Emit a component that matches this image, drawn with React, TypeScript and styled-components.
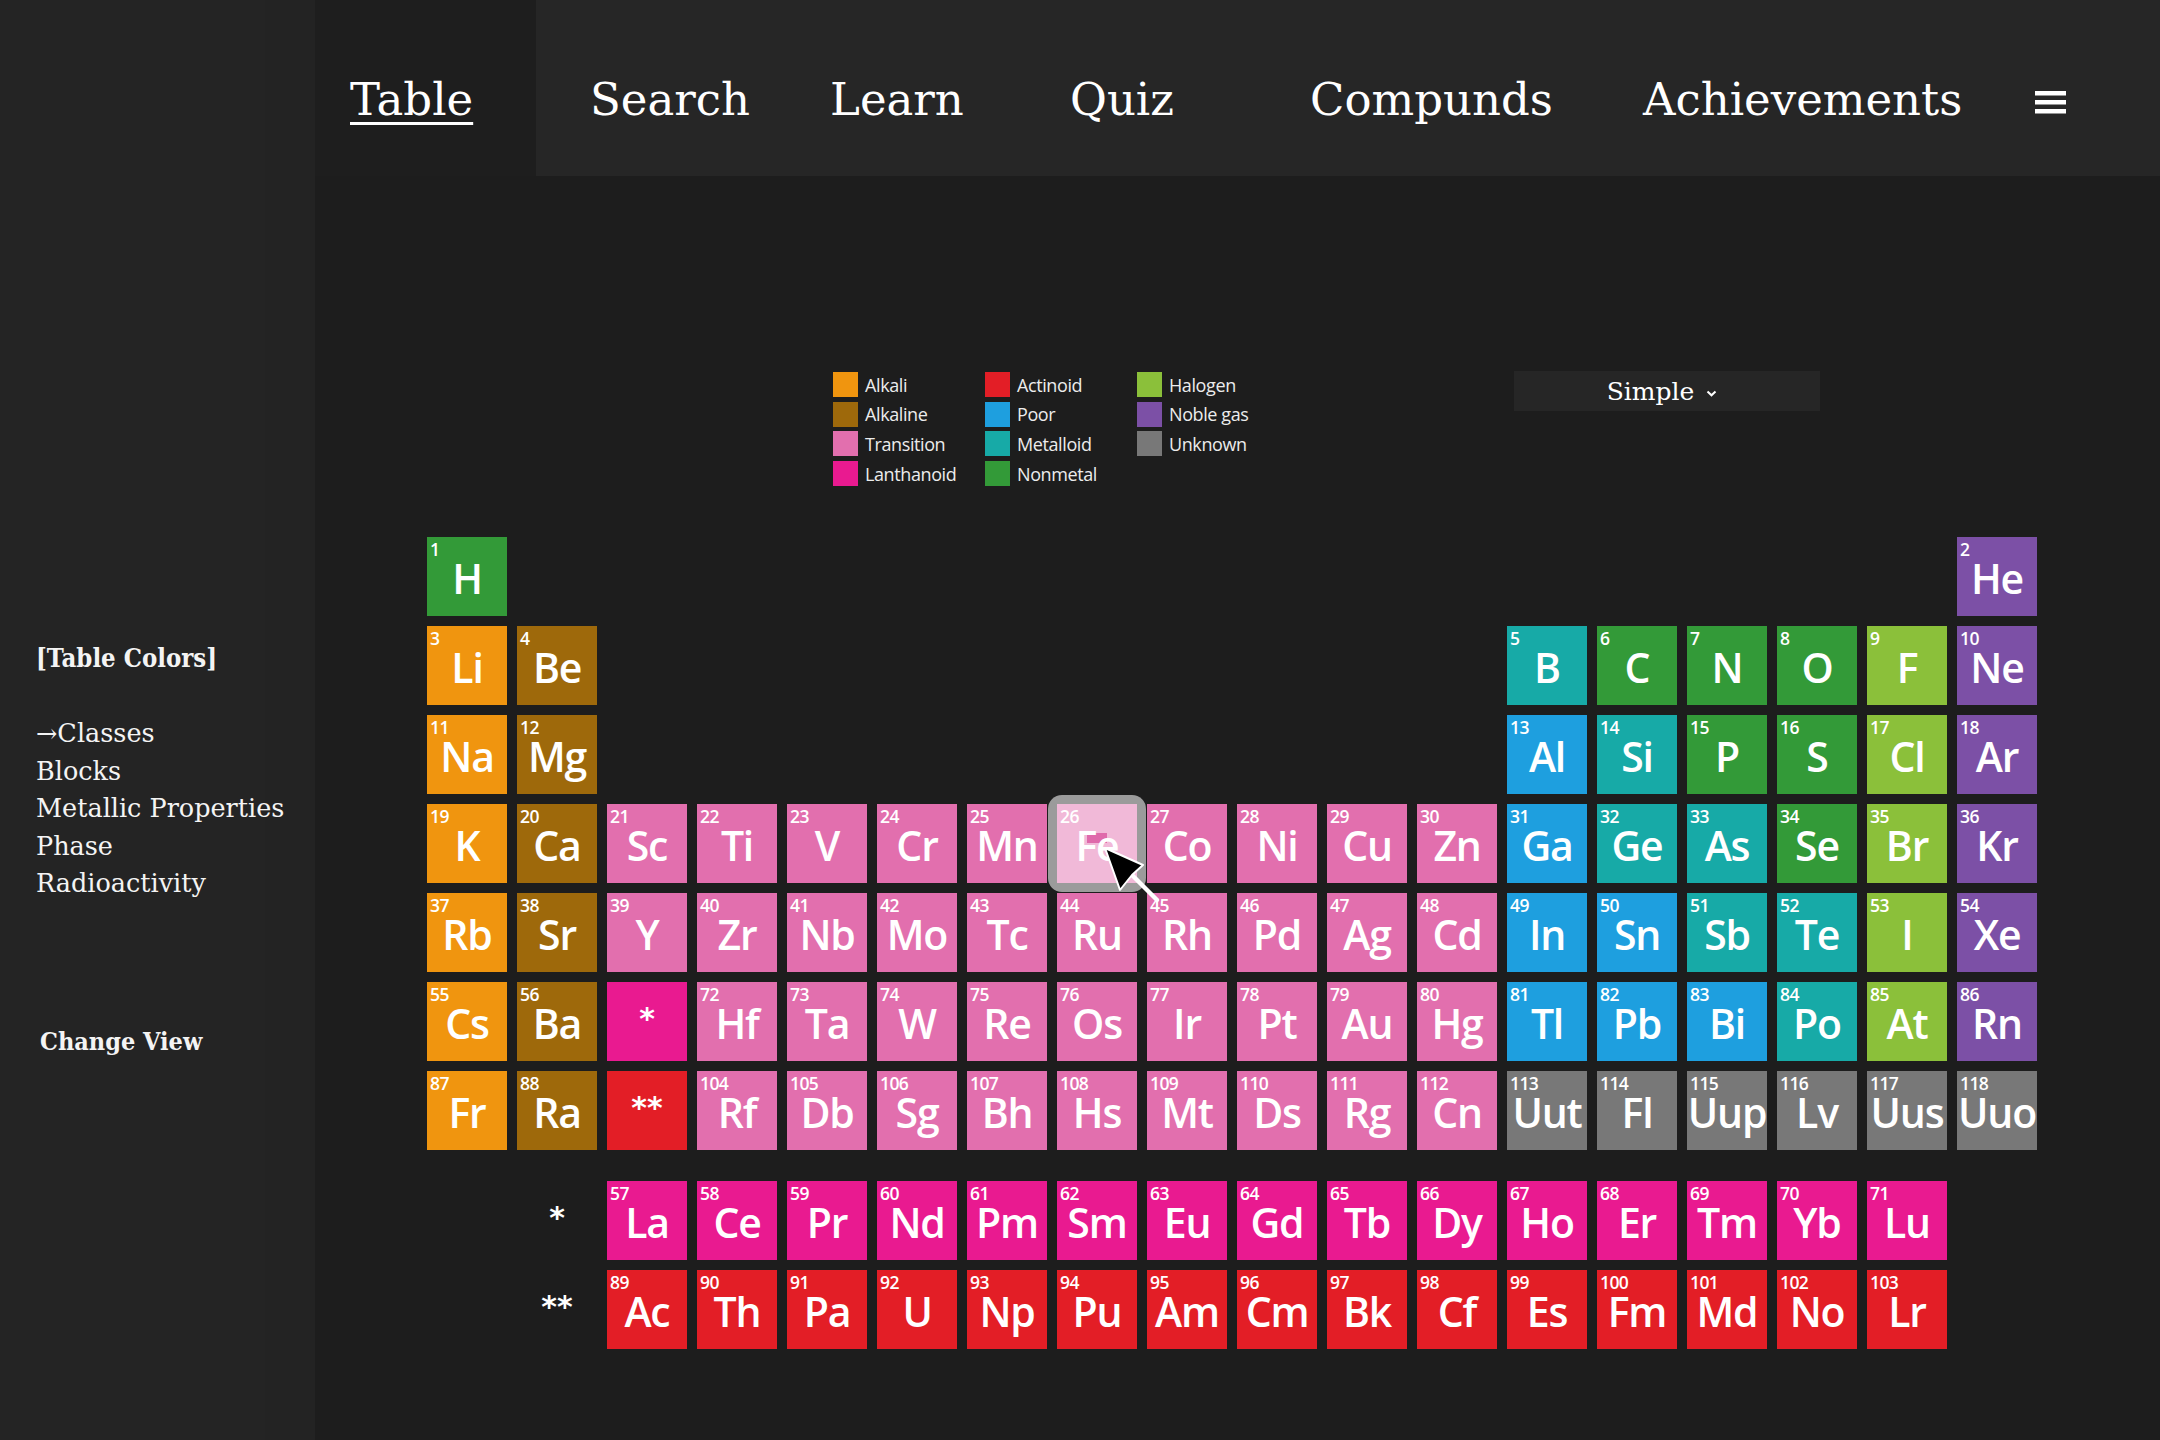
import React from 'react';
import styled, { createGlobalStyle } from 'styled-components';

type Cls =
  | 'alkali'
  | 'alkaline'
  | 'transition'
  | 'lanthanoid'
  | 'actinoid'
  | 'poor'
  | 'metalloid'
  | 'nonmetal'
  | 'halogen'
  | 'noble'
  | 'unknown';

const COLORS: Record<Cls, string> = {
  alkali: '#F0950F',
  alkaline: '#9E690B',
  transition: '#E26FAE',
  lanthanoid: '#E91A90',
  actinoid: '#E31E26',
  poor: '#1E9FDF',
  metalloid: '#17AAA7',
  nonmetal: '#339A38',
  halogen: '#8BC03A',
  noble: '#7C50A6',
  unknown: '#787878',
};

const LEGEND: [Cls, string][] = [
  ['alkali', 'Alkali'],
  ['alkaline', 'Alkaline'],
  ['transition', 'Transition'],
  ['lanthanoid', 'Lanthanoid'],
  ['actinoid', 'Actinoid'],
  ['poor', 'Poor'],
  ['metalloid', 'Metalloid'],
  ['nonmetal', 'Nonmetal'],
  ['halogen', 'Halogen'],
  ['noble', 'Noble gas'],
  ['unknown', 'Unknown'],
];

interface El {
  n: number;
  s: string;
  cls: Cls;
  col: number;
  row: number;
}

const seq = (syms: string, start: number, col: number, row: number, cls: Cls): El[] =>
  syms.split(' ').map((s, i) => ({ n: start + i, s, cls, col: col + i, row }));

const ELEMENTS: El[] = [
  ...seq('H', 1, 1, 1, 'nonmetal'),
  ...seq('He', 2, 18, 1, 'noble'),
  ...seq('Li', 3, 1, 2, 'alkali'),
  ...seq('Be', 4, 2, 2, 'alkaline'),
  ...seq('B', 5, 13, 2, 'metalloid'),
  ...seq('C N O', 6, 14, 2, 'nonmetal'),
  ...seq('F', 9, 17, 2, 'halogen'),
  ...seq('Ne', 10, 18, 2, 'noble'),
  ...seq('Na', 11, 1, 3, 'alkali'),
  ...seq('Mg', 12, 2, 3, 'alkaline'),
  ...seq('Al', 13, 13, 3, 'poor'),
  ...seq('Si', 14, 14, 3, 'metalloid'),
  ...seq('P S', 15, 15, 3, 'nonmetal'),
  ...seq('Cl', 17, 17, 3, 'halogen'),
  ...seq('Ar', 18, 18, 3, 'noble'),
  ...seq('K', 19, 1, 4, 'alkali'),
  ...seq('Ca', 20, 2, 4, 'alkaline'),
  ...seq('Sc Ti V Cr Mn Fe Co Ni Cu Zn', 21, 3, 4, 'transition'),
  ...seq('Ga', 31, 13, 4, 'poor'),
  ...seq('Ge As', 32, 14, 4, 'metalloid'),
  ...seq('Se', 34, 16, 4, 'nonmetal'),
  ...seq('Br', 35, 17, 4, 'halogen'),
  ...seq('Kr', 36, 18, 4, 'noble'),
  ...seq('Rb', 37, 1, 5, 'alkali'),
  ...seq('Sr', 38, 2, 5, 'alkaline'),
  ...seq('Y Zr Nb Mo Tc Ru Rh Pd Ag Cd', 39, 3, 5, 'transition'),
  ...seq('In Sn', 49, 13, 5, 'poor'),
  ...seq('Sb Te', 51, 15, 5, 'metalloid'),
  ...seq('I', 53, 17, 5, 'halogen'),
  ...seq('Xe', 54, 18, 5, 'noble'),
  ...seq('Cs', 55, 1, 6, 'alkali'),
  ...seq('Ba', 56, 2, 6, 'alkaline'),
  ...seq('Hf Ta W Re Os Ir Pt Au Hg', 72, 4, 6, 'transition'),
  ...seq('Tl Pb Bi', 81, 13, 6, 'poor'),
  ...seq('Po', 84, 16, 6, 'metalloid'),
  ...seq('At', 85, 17, 6, 'halogen'),
  ...seq('Rn', 86, 18, 6, 'noble'),
  ...seq('Fr', 87, 1, 7, 'alkali'),
  ...seq('Ra', 88, 2, 7, 'alkaline'),
  ...seq('Rf Db Sg Bh Hs Mt Ds Rg Cn', 104, 4, 7, 'transition'),
  ...seq('Uut Fl Uup Lv Uus Uuo', 113, 13, 7, 'unknown'),
  ...seq('La Ce Pr Nd Pm Sm Eu Gd Tb Dy Ho Er Tm Yb Lu', 57, 3, 9, 'lanthanoid'),
  ...seq('Ac Th Pa U Np Pu Am Cm Bk Cf Es Fm Md No Lr', 89, 3, 10, 'actinoid'),
];

const NAV: { label: string; width?: number }[] = [
  { label: 'Table' },
  { label: 'Search' },
  { label: 'Learn' },
  { label: 'Quiz' },
  { label: 'Compunds', width: 333 },
  { label: 'Achievements', width: 0 },
];

const GlobalStyle = createGlobalStyle`
  html, body {
    margin: 0;
    padding: 0;
    background: #1d1d1d;
  }
  body {
    width: 2160px;
    height: 1440px;
    overflow: hidden;
  }
  * { box-sizing: border-box; }
`;

const Page = styled.div`
  display: flex;
  width: 2160px;
  height: 1440px;
  background: #1d1d1d;
  color: #ffffff;
`;

const Sidebar = styled.aside`
  flex: none;
  width: 315px;
  height: 100%;
  background: linear-gradient(to right, #242424 0, #242424 265px, #232323 265px, #232323 315px);
  padding: 640px 0 0 36px;
  display: flex;
  flex-direction: column;
  font-family: 'DejaVu Serif', serif;
  font-size: 25.5px;
  line-height: 37.5px;
  color: #f4f4f4;
`;

const SideHeading = styled.div<{ $indent?: number; $gap?: number; $size: number }>`
  font-family: 'DejaVu Serif Condensed', 'DejaVu Serif', serif;
  font-weight: 700;
  font-size: ${(p) => p.$size}px;
  padding-left: ${(p) => p.$indent ?? 0}px;
  margin-top: ${(p) => p.$gap ?? 0}px;
  white-space: nowrap;
`;

const SideList = styled.ul`
  list-style: none;
  margin: 37.5px 0 0;
  padding: 0;
`;

const SideItem = styled.li`
  white-space: nowrap;
`;

const Main = styled.main`
  flex: 1;
  display: flex;
  flex-direction: column;
  min-width: 0;
`;

const NavBar = styled.nav`
  flex: none;
  height: 176px;
  background: #262626;
  display: flex;
  align-items: stretch;
  font-family: 'DejaVu Serif', serif;
  font-size: 45px;
  line-height: 45px;
`;

const NavItem = styled.a<{ $active?: boolean; $width?: number }>`
  position: relative;
  flex: none;
  width: ${(p) => (p.$width === 0 ? 'auto' : `${p.$width ?? 240}px`)};
  padding: 77px 0 0 35px;
  color: #ffffff;
  white-space: nowrap;
  text-decoration: ${(p) => (p.$active ? 'underline' : 'none')};
  text-decoration-thickness: 3px;
  text-underline-offset: 7px;
  &::before {
    content: '';
    display: ${(p) => (p.$active ? 'block' : 'none')};
    position: absolute;
    left: 0;
    top: 0;
    bottom: 0;
    width: 221px;
    background: #1e1e1e;
  }
`;

const NavLabel = styled.span`
  position: relative;
`;

const MenuButton = styled.div`
  margin-left: auto;
  margin-right: 94px;
  padding-top: 91px;
  & > svg {
    display: block;
  }
`;

const Content = styled.section`
  flex: 1;
  padding: 195px 0 0 112px;
  display: flex;
  flex-direction: column;
`;

const TopRow = styled.div`
  display: flex;
  align-items: flex-start;
  height: 166px;
  padding-left: 406px;
`;

const Legend = styled.div`
  margin-top: 1px;
  display: grid;
  grid-template-rows: repeat(4, 25px);
  grid-auto-flow: column;
  grid-auto-columns: 152px;
  row-gap: 4.7px;
  font-family: 'Open Sans', 'Noto Sans', sans-serif;
  font-size: 18px;
  letter-spacing: -0.4px;
  color: #ececec;
`;

const LegendItem = styled.div`
  display: flex;
  align-items: center;
  gap: 7px;
  white-space: nowrap;
`;

const Swatch = styled.span<{ $color: string }>`
  width: 25px;
  height: 25px;
  flex: none;
  background: ${(p) => p.$color};
`;

const Dropdown = styled.div`
  margin-left: 225px;
  width: 306px;
  height: 40px;
  background: #262626;
  display: flex;
  align-items: center;
  justify-content: center;
  gap: 12px;
  padding-right: 10px;
  font-family: 'DejaVu Serif', serif;
  font-size: 25px;
  color: #ffffff;
  & > svg {
    display: block;
    margin-top: 4px;
  }
`;

const TableGrid = styled.div`
  display: grid;
  grid-template-columns: repeat(18, 80px);
  grid-template-rows: repeat(7, 79px) 11px repeat(2, 79px);
  column-gap: 10px;
  row-gap: 10px;
  font-family: 'Open Sans', 'Noto Sans', sans-serif;
`;

const Cell = styled.div<{ $bg: string; $col: number; $row: number }>`
  grid-column: ${(p) => p.$col};
  grid-row: ${(p) => p.$row};
  background: ${(p) => p.$bg};
  color: #ffffff;
  overflow: visible;
`;

const HighlightCell = styled.div<{ $col: number; $row: number }>`
  grid-column: ${(p) => p.$col};
  grid-row: ${(p) => p.$row};
  position: relative;
  z-index: 2;
  color: #ffffff;
  &::before {
    content: '';
    position: absolute;
    inset: -9px;
    border-radius: 14px;
    background: #9b9b9b;
  }
  &::after {
    content: '';
    position: absolute;
    inset: 0;
    background: #f1b9d8;
  }
`;

const Layer = styled.div`
  position: relative;
  z-index: 2;
`;

const Mark = styled.span`
  position: absolute;
  left: 30px;
  top: 29px;
  width: 20px;
  height: 10px;
  background: #df6aab;
  z-index: 1;
`;

const Cursor = styled.svg`
  position: absolute;
  left: 46px;
  top: 42px;
  z-index: 3;
  overflow: visible;
`;

const Num = styled.div`
  font-size: 17.5px;
  font-weight: 600;
  line-height: 18px;
  height: 20.5px;
  padding: 3px 0 0 3px;
  letter-spacing: -0.6px;
`;

const Sym = styled.div`
  font-size: 41px;
  font-weight: 600;
  line-height: 40px;
  text-align: center;
  letter-spacing: -1.2px;
  white-space: nowrap;
`;

const StarCell = styled.div<{ $bg: string; $col: number; $row: number }>`
  grid-column: ${(p) => p.$col};
  grid-row: ${(p) => p.$row};
  background: ${(p) => p.$bg};
  display: flex;
  align-items: center;
  justify-content: center;
  padding-bottom: 6px;
  font-size: 30px;
  font-weight: 700;
  color: #ffffff;
  font-family: 'DejaVu Sans', sans-serif;
`;

const RowLabel = styled.div<{ $row: number }>`
  grid-column: 2;
  grid-row: ${(p) => p.$row};
  display: flex;
  align-items: center;
  justify-content: center;
  padding-bottom: 6px;
  font-size: 30px;
  font-weight: 700;
  color: #ffffff;
  font-family: 'DejaVu Sans', sans-serif;
`;

export default function App() {
  return (
    <>
      <GlobalStyle />
      <Page>
        <Sidebar>
          <SideHeading $size={25.5}>[Table Colors]</SideHeading>
          <SideList>
            <SideItem>→Classes</SideItem>
            <SideItem>Blocks</SideItem>
            <SideItem>Metallic Properties</SideItem>
            <SideItem>Phase</SideItem>
            <SideItem>Radioactivity</SideItem>
          </SideList>
          <SideHeading $size={25} $indent={4} $gap={120}>
            Change View
          </SideHeading>
        </Sidebar>
        <Main>
          <NavBar>
            {NAV.map((item, i) => (
              <NavItem key={item.label} $active={i === 0} $width={item.width}>
                <NavLabel>{item.label}</NavLabel>
              </NavItem>
            ))}
            <MenuButton>
              <svg width="31" height="23" viewBox="0 0 31 23">
                <rect x="0" y="0" width="31" height="4.5" fill="#fff" />
                <rect x="0" y="9" width="31" height="4.5" fill="#fff" />
                <rect x="0" y="18" width="31" height="4.5" fill="#fff" />
              </svg>
            </MenuButton>
          </NavBar>
          <Content>
            <TopRow>
              <Legend>
                {LEGEND.map(([cls, label]) => (
                  <LegendItem key={cls}>
                    <Swatch $color={COLORS[cls]} />
                    {label}
                  </LegendItem>
                ))}
              </Legend>
              <Dropdown>
                <span>Simple</span>
                <svg width="11" height="7" viewBox="0 0 11 7">
                  <path d="M1.5 1.5 L5.5 5.3 L9.5 1.5" fill="none" stroke="#fff" strokeWidth="2" />
                </svg>
              </Dropdown>
            </TopRow>
            <TableGrid>
              {ELEMENTS.map((el) =>
                el.s === 'Fe' ? (
                  <HighlightCell key={el.n} $col={el.col} $row={el.row}>
                    <Mark />
                    <Layer>
                      <Num>{el.n}</Num>
                      <Sym>{el.s}</Sym>
                    </Layer>
                    <Cursor width="58" height="58" viewBox="0 0 58 58">
                      <path d="M29 29 L54 54" stroke="#fff" strokeWidth="4.5" strokeLinecap="round" />
                      <path
                        d="M2 2 L40 19 L29 29 L17 44 Z"
                        fill="#000"
                        stroke="#fff"
                        strokeWidth="2"
                        strokeLinejoin="round"
                      />
                    </Cursor>
                  </HighlightCell>
                ) : (
                  <Cell key={el.n} $bg={COLORS[el.cls]} $col={el.col} $row={el.row}>
                    <Num>{el.n}</Num>
                    <Sym>{el.s}</Sym>
                  </Cell>
                ),
              )}
              <StarCell $bg={COLORS.lanthanoid} $col={3} $row={6}>
                *
              </StarCell>
              <StarCell $bg={COLORS.actinoid} $col={3} $row={7}>
                **
              </StarCell>
              <RowLabel $row={9}>*</RowLabel>
              <RowLabel $row={10}>**</RowLabel>
            </TableGrid>
          </Content>
        </Main>
      </Page>
    </>
  );
}
